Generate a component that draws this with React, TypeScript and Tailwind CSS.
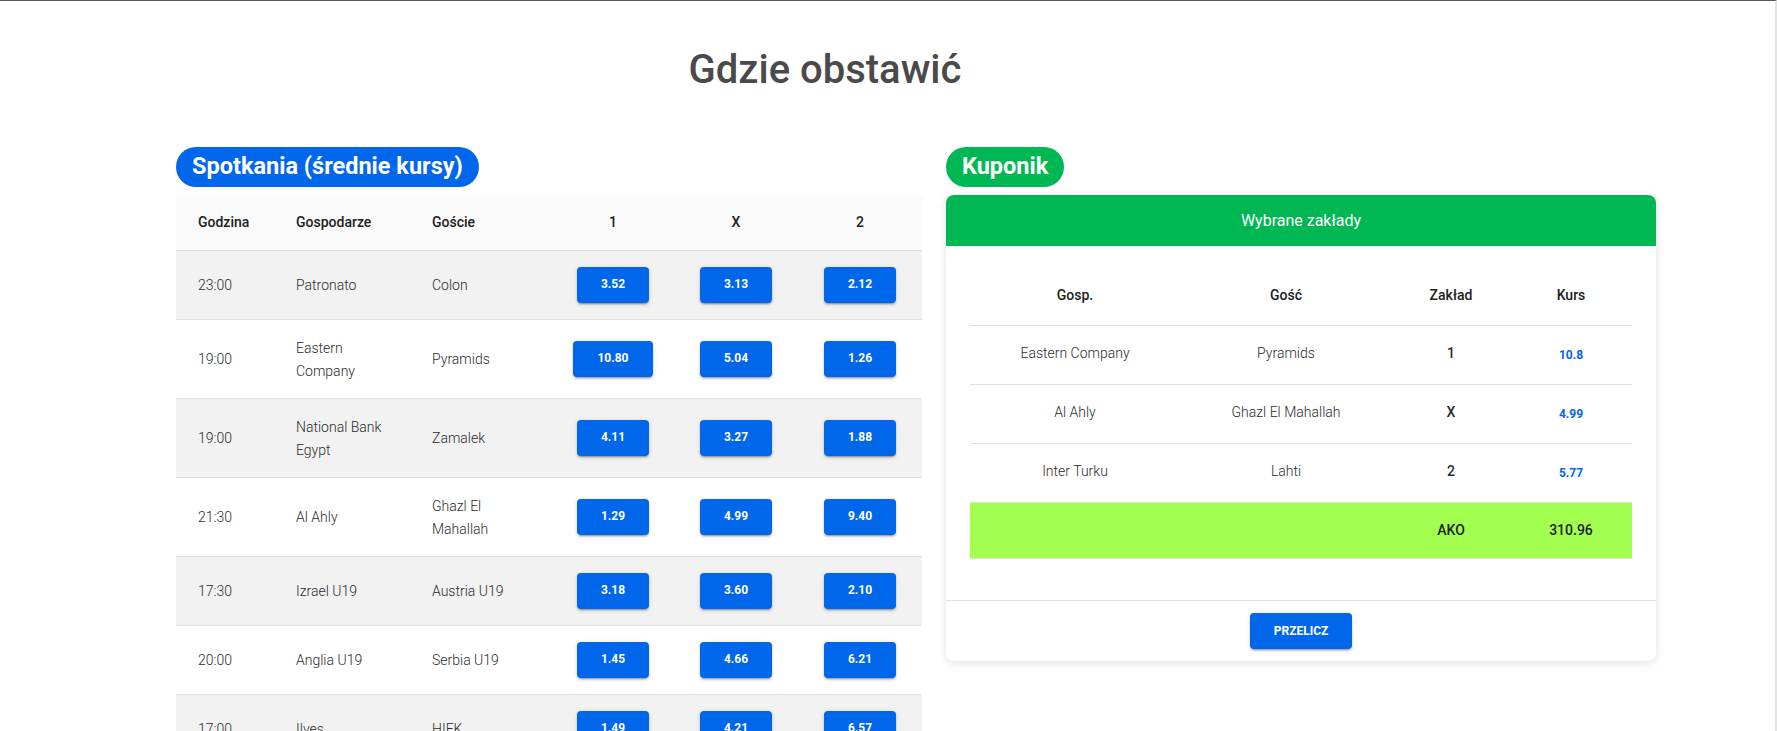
const matches = [
  { time: '23:00', home: 'Patronato', away: 'Colon', odds: ['3.52', '3.13', '2.12'] },
  { time: '19:00', home: 'Eastern Company', away: 'Pyramids', odds: ['10.80', '5.04', '1.26'] },
  { time: '19:00', home: 'National Bank Egypt', away: 'Zamalek', odds: ['4.11', '3.27', '1.88'] },
  { time: '21:30', home: 'Al Ahly', away: 'Ghazl El Mahallah', odds: ['1.29', '4.99', '9.40'] },
  { time: '17:30', home: 'Izrael U19', away: 'Austria U19', odds: ['3.18', '3.60', '2.10'] },
  { time: '20:00', home: 'Anglia U19', away: 'Serbia U19', odds: ['1.45', '4.66', '6.21'] },
  { time: '17:00', home: 'Ilves', away: 'HIFK', odds: ['1.49', '4.21', '6.57'] },
];

const coupon = [
  { home: 'Eastern Company', away: 'Pyramids', bet: '1', odd: '10.8' },
  { home: 'Al Ahly', away: 'Ghazl El Mahallah', bet: 'X', odd: '4.99' },
  { home: 'Inter Turku', away: 'Lahti', bet: '2', odd: '5.77' },
];

const btnShadow =
  'shadow-[0_3px_1px_-2px_rgba(0,0,0,0.2),0_2px_2px_0_rgba(0,0,0,0.14),0_1px_5px_0_rgba(0,0,0,0.12)]';

const OddButton = ({ value }: { value: string }) => (
  <button
    className={`h-9 px-6 rounded bg-[#0066ea] text-white text-[12px] font-bold ${btnShadow}`}
  >
    {value}
  </button>
);

const App = () => {
  return (
    <div className="min-h-screen bg-white border-t border-[#555] border-r-2 border-r-[#e4e4e4] font-['Roboto','Liberation_Sans',sans-serif]">
      <div className="w-[1650px] text-center pt-[45px]">
        <h1 className="text-[40px] leading-[48px] font-medium text-[#4a4a4a]">Gdzie obstawić</h1>
      </div>

      <div className="flex gap-6 pl-[176px] pt-[53px]">
        {/* spotkania */}
        <div className="w-[746px]">
          <div className="inline-flex h-10 items-center rounded-full bg-[#0066ea] px-4 text-white text-[23.5px] font-bold">
            Spotkania (średnie kursy)
          </div>
          <table className="mt-2 w-[746px] table-fixed border-collapse">
            <colgroup>
              <col className="w-[98px]" />
              <col className="w-[136px]" />
              <col className="w-[142px]" />
              <col className="w-[122px]" />
              <col className="w-[124px]" />
              <col className="w-[124px]" />
            </colgroup>
            <thead>
              <tr className="h-[55px] bg-[#fafafa] border-b border-[#e0e0e0] text-[14px] font-medium text-[#212121]">
                <th className="px-[22px] text-left font-medium">Godzina</th>
                <th className="px-[22px] text-left font-medium">Gospodarze</th>
                <th className="px-[22px] text-left font-medium">Goście</th>
                <th className="text-center font-medium">1</th>
                <th className="text-center font-medium">X</th>
                <th className="text-center font-medium">2</th>
              </tr>
            </thead>
            <tbody>
              {matches.map((m, i) => (
                <tr
                  key={i}
                  className={`border-b border-[#e0e0e0] text-[14px] leading-[23px] font-light text-[#2b2b2b] ${
                    i % 2 === 0 ? 'bg-[#f2f2f2]' : 'bg-white'
                  }`}
                >
                  <td className="px-[22px] pt-[17px] pb-[15px] align-middle">{m.time}</td>
                  <td className="px-[22px] pt-[17px] pb-[15px] align-middle">{m.home}</td>
                  <td className="px-[22px] pt-[17px] pb-[15px] align-middle">{m.away}</td>
                  {m.odds.map((o, j) => (
                    <td key={j} className="py-4 text-center align-middle">
                      <OddButton value={o} />
                    </td>
                  ))}
                </tr>
              ))}
            </tbody>
          </table>
        </div>

        {/* kuponik */}
        <div className="w-[710px]">
          <div className="inline-flex h-10 items-center rounded-full bg-[#00b853] px-4 text-white text-[23.5px] font-bold">
            Kuponik
          </div>
          <div className="mt-2 rounded-lg bg-white shadow-[0_2px_10px_rgba(0,0,0,0.12)]">
            <div className="h-[51px] flex items-center justify-center rounded-t-lg bg-[#00b853] text-white text-[16px]">
              Wybrane zakłady
            </div>
            <div className="px-6 pt-5 pb-[41px]">
              <table className="w-[662px] table-fixed border-collapse">
                <colgroup>
                  <col className="w-[210px]" />
                  <col className="w-[212px]" />
                  <col className="w-[118px]" />
                  <col className="w-[122px]" />
                </colgroup>
                <thead>
                  <tr className="h-[59px] border-b border-[#e0e0e0] text-[14px] text-[#212121]">
                    <th className="text-center font-medium">Gosp.</th>
                    <th className="text-center font-medium">Gość</th>
                    <th className="text-center font-medium">Zakład</th>
                    <th className="text-center font-medium">Kurs</th>
                  </tr>
                </thead>
                <tbody>
                  {coupon.map((c, i) => (
                    <tr key={i} className="h-[59px] border-b border-[#e0e0e0] text-[14px] text-[#2b2b2b]">
                      <td className="text-center font-light pb-0.5">{c.home}</td>
                      <td className="text-center font-light pb-0.5">{c.away}</td>
                      <td className="text-center font-medium pb-0.5">{c.bet}</td>
                      <td className="text-center text-[12px] font-bold text-[#0066ea]">{c.odd}</td>
                    </tr>
                  ))}
                  <tr className="h-[56px] border-b border-[#e0e0e0] bg-[#a3ff4f] text-[14px] font-medium text-[#212121]">
                    <td></td>
                    <td></td>
                    <td className="text-center">AKO</td>
                    <td className="text-center">310.96</td>
                  </tr>
                </tbody>
              </table>
            </div>
            <div className="flex justify-center border-t border-[#e0e0e0] py-3">
              <button
                className={`h-9 w-[102px] rounded bg-[#0066ea] text-white text-[12px] font-bold uppercase ${btnShadow}`}
              >
                Przelicz
              </button>
            </div>
          </div>
        </div>
      </div>
    </div>
  );
};

export default App;
